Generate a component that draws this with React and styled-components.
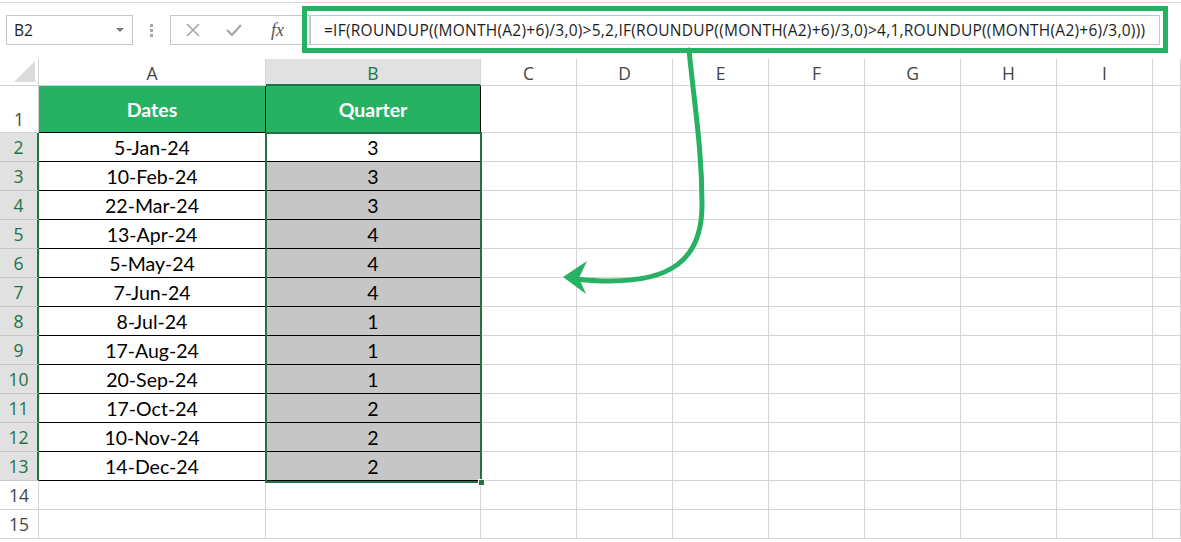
import React from 'react';
import styled, { createGlobalStyle } from 'styled-components';

const GlobalStyle = createGlobalStyle`
  html, body { margin: 0; padding: 0; background: #ffffff; }
  body { overflow: hidden; }
  * { box-sizing: border-box; }
`;

const GREEN = '#27b163';
const XL_GREEN = '#217346';
const GRID = '#d4d4d4';

const Page = styled.div`
  position: relative;
  width: 1181px;
  height: 542px;
  overflow: hidden;
  background: #fff;
`;

const FormulaBar = styled.div`
  height: 57px;
  margin-top: 2px;
  border-top: 1px solid #d9d9d9;
  display: flex;
  align-items: flex-start;
  padding-top: 12px;
  padding-left: 6px;
  position: relative;
`;

const NameBox = styled.div`
  width: 127px;
  height: 30px;
  border: 1px solid #c6c6c6;
  display: flex;
  align-items: center;
  justify-content: space-between;
  padding: 0 8px 0 7px;
  font-family: 'Open Sans', sans-serif;
  font-size: 15.5px;
  color: #222;
`;

const Caret = styled.span`
  width: 0;
  height: 0;
  border-left: 4px solid transparent;
  border-right: 4px solid transparent;
  border-top: 4px solid #777;
`;

const Dots = styled.div`
  width: 37px;
  height: 30px;
  display: flex;
  flex-direction: column;
  align-items: center;
  justify-content: center;
  gap: 2px;
  & > span { width: 3px; height: 3px; background: #a6a6a6; }
`;

const FnBox = styled.div`
  width: 140px;
  height: 30px;
  border: 1px solid #c6c6c6;
  display: flex;
  align-items: center;
  padding-left: 14px;
  gap: 24px;
`;

const Fx = styled.span`
  font-family: 'Liberation Serif', 'DejaVu Serif', serif;
  font-style: italic;
  font-size: 18px;
  color: #555;
  margin-left: 4px;
`;

const FormulaInput = styled.div`
  width: 850px;
  height: 30px;
  border: 1px solid #c6c6c6;
  display: flex;
  align-items: center;
  padding-left: 13px;
  font-family: 'Open Sans', sans-serif;
  font-size: 15.5px;
  letter-spacing: 0.25px;
  color: #1e1e1e;
  white-space: nowrap;
  overflow: hidden;
`;

const Highlight = styled.div`
  position: absolute;
  left: 302px;
  top: 3px;
  width: 866px;
  height: 47px;
  border: 5px solid ${GREEN};
  pointer-events: none;
`;

const Sheet = styled.div`
  display: grid;
  grid-template-columns: 39px 227px 215px repeat(7, 96px) 1fr;
  grid-template-rows: 27px 47px repeat(14, 29px);
  position: relative;
`;

const Corner = styled.div`
  border-right: 1px solid ${GRID};
  border-bottom: 1px solid ${GRID};
  position: relative;
  &::after {
    content: '';
    position: absolute;
    right: 3px;
    bottom: 3px;
    width: 0;
    height: 0;
    border-left: 21px solid transparent;
    border-bottom: 21px solid #dcdcdc;
  }
`;

const ColHead = styled.div`
  border-right: 1px solid ${GRID};
  border-bottom: ${p => (p.$sel ? `2px solid ${XL_GREEN}` : `1px solid ${GRID}`)};
  background: ${p => (p.$sel ? '#e1e1e1' : '#fff')};
  color: ${p => (p.$sel ? XL_GREEN : '#444')};
  font-family: 'Open Sans', sans-serif;
  font-size: 17.5px;
  display: flex;
  align-items: center;
  justify-content: center;
  padding-top: 2px;
`;

const RowHead = styled.div`
  border-right: ${p => (p.$sel ? `2px solid ${XL_GREEN}` : `1px solid ${GRID}`)};
  border-bottom: 1px solid ${p => (p.$sel ? '#c6c6c6' : GRID)};
  background: ${p => (p.$sel ? '#e1e1e1' : '#fff')};
  color: ${p => (p.$sel ? XL_GREEN : '#444')};
  font-family: 'Open Sans', sans-serif;
  font-size: 17.5px;
  display: flex;
  align-items: ${p => (p.$tall ? 'flex-end' : 'center')};
  justify-content: center;
  padding-bottom: ${p => (p.$tall ? '1px' : '0')};
`;

const Cell = styled.div`
  border-right: 1px solid ${p => (p.$table ? '#000' : GRID)};
  border-bottom: 1px solid ${p => (p.$table ? '#000' : GRID)};
  background: ${p => (p.$head ? GREEN : p.$fill ? '#c6c6c6' : '#fff')};
  color: ${p => (p.$head ? '#fff' : '#000')};
  font-family: Lato, 'Open Sans', sans-serif;
  font-weight: ${p => (p.$head ? 700 : 400)};
  font-size: 19.5px;
  display: flex;
  align-items: center;
  justify-content: center;
  padding-top: 1px;
`;

const Selection = styled.div`
  position: absolute;
  left: 265px;
  top: 73px;
  width: 217px;
  height: 351px;
  border: 2px solid ${XL_GREEN};
  pointer-events: none;
`;

const Handle = styled.div`
  position: absolute;
  right: -5px;
  bottom: -5px;
  width: 7px;
  height: 7px;
  background: ${XL_GREEN};
  border: 1px solid #fff;
`;

const Overlay = styled.svg`
  position: absolute;
  left: 0;
  top: 0;
  pointer-events: none;
`;

const COLS = ['A', 'B', 'C', 'D', 'E', 'F', 'G', 'H', 'I', ''];
const DATES = ['5-Jan-24', '10-Feb-24', '22-Mar-24', '13-Apr-24', '5-May-24', '7-Jun-24', '8-Jul-24', '17-Aug-24', '20-Sep-24', '17-Oct-24', '10-Nov-24', '14-Dec-24'];
const QUARTERS = [3, 3, 3, 4, 4, 4, 1, 1, 1, 2, 2, 2];
const FORMULA = '=IF(ROUNDUP((MONTH(A2)+6)/3,0)>5,2,IF(ROUNDUP((MONTH(A2)+6)/3,0)>4,1,ROUNDUP((MONTH(A2)+6)/3,0)))';

export default function App() {
  const rows = [];
  for (let r = 1; r <= 15; r++) {
    const inTable = r <= 13;
    const sel = r >= 2 && r <= 13;
    rows.push(
      <RowHead key={`h${r}`} $sel={sel} $tall={r === 1}>{r}</RowHead>
    );
    COLS.forEach((c, ci) => {
      let content = '';
      let table = false;
      let head = false;
      let fill = false;
      if (inTable && ci < 2) {
        table = true;
        if (r === 1) {
          head = true;
          content = ci === 0 ? 'Dates' : 'Quarter';
        } else {
          content = ci === 0 ? DATES[r - 2] : QUARTERS[r - 2];
          fill = ci === 1 && r >= 3;
        }
      }
      rows.push(
        <Cell key={`${r}-${ci}`} $table={table} $head={head} $fill={fill}>{content}</Cell>
      );
    });
  }

  return (
    <Page>
      <GlobalStyle />
      <FormulaBar>
        <NameBox>
          <span>B2</span>
          <Caret />
        </NameBox>
        <Dots><span /><span /><span /></Dots>
        <FnBox>
          <svg width="16" height="16" viewBox="0 0 16 16">
            <path d="M2 2 L14 14 M14 2 L2 14" stroke="#a6a6a6" strokeWidth="1.6" fill="none" />
          </svg>
          <svg width="18" height="16" viewBox="0 0 18 16">
            <path d="M2 8 L7 13 L16 3" stroke="#a6a6a6" strokeWidth="2.2" fill="none" />
          </svg>
          <Fx>fx</Fx>
        </FnBox>
        <FormulaInput>{FORMULA}</FormulaInput>
        <Highlight />
      </FormulaBar>
      <Sheet>
        <Corner />
        {COLS.map((c, i) => (
          <ColHead key={`c${i}`} $sel={c === 'B'}>{c}</ColHead>
        ))}
        {rows}
        <Selection>
          <Handle />
        </Selection>
      </Sheet>
      <Overlay width="1181" height="542" viewBox="0 0 1181 542">
        <path
          d="M689 50 C 695 110, 702 150, 702 205 C 702 262, 668 281, 610 281 C 595 281, 585 280, 574 279"
          stroke={GREEN}
          strokeWidth="5"
          fill="none"
          strokeLinecap="round"
        />
        <path d="M563 277 L587 261 L579 278 L586 294 Z" fill={GREEN} />
      </Overlay>
    </Page>
  );
}
